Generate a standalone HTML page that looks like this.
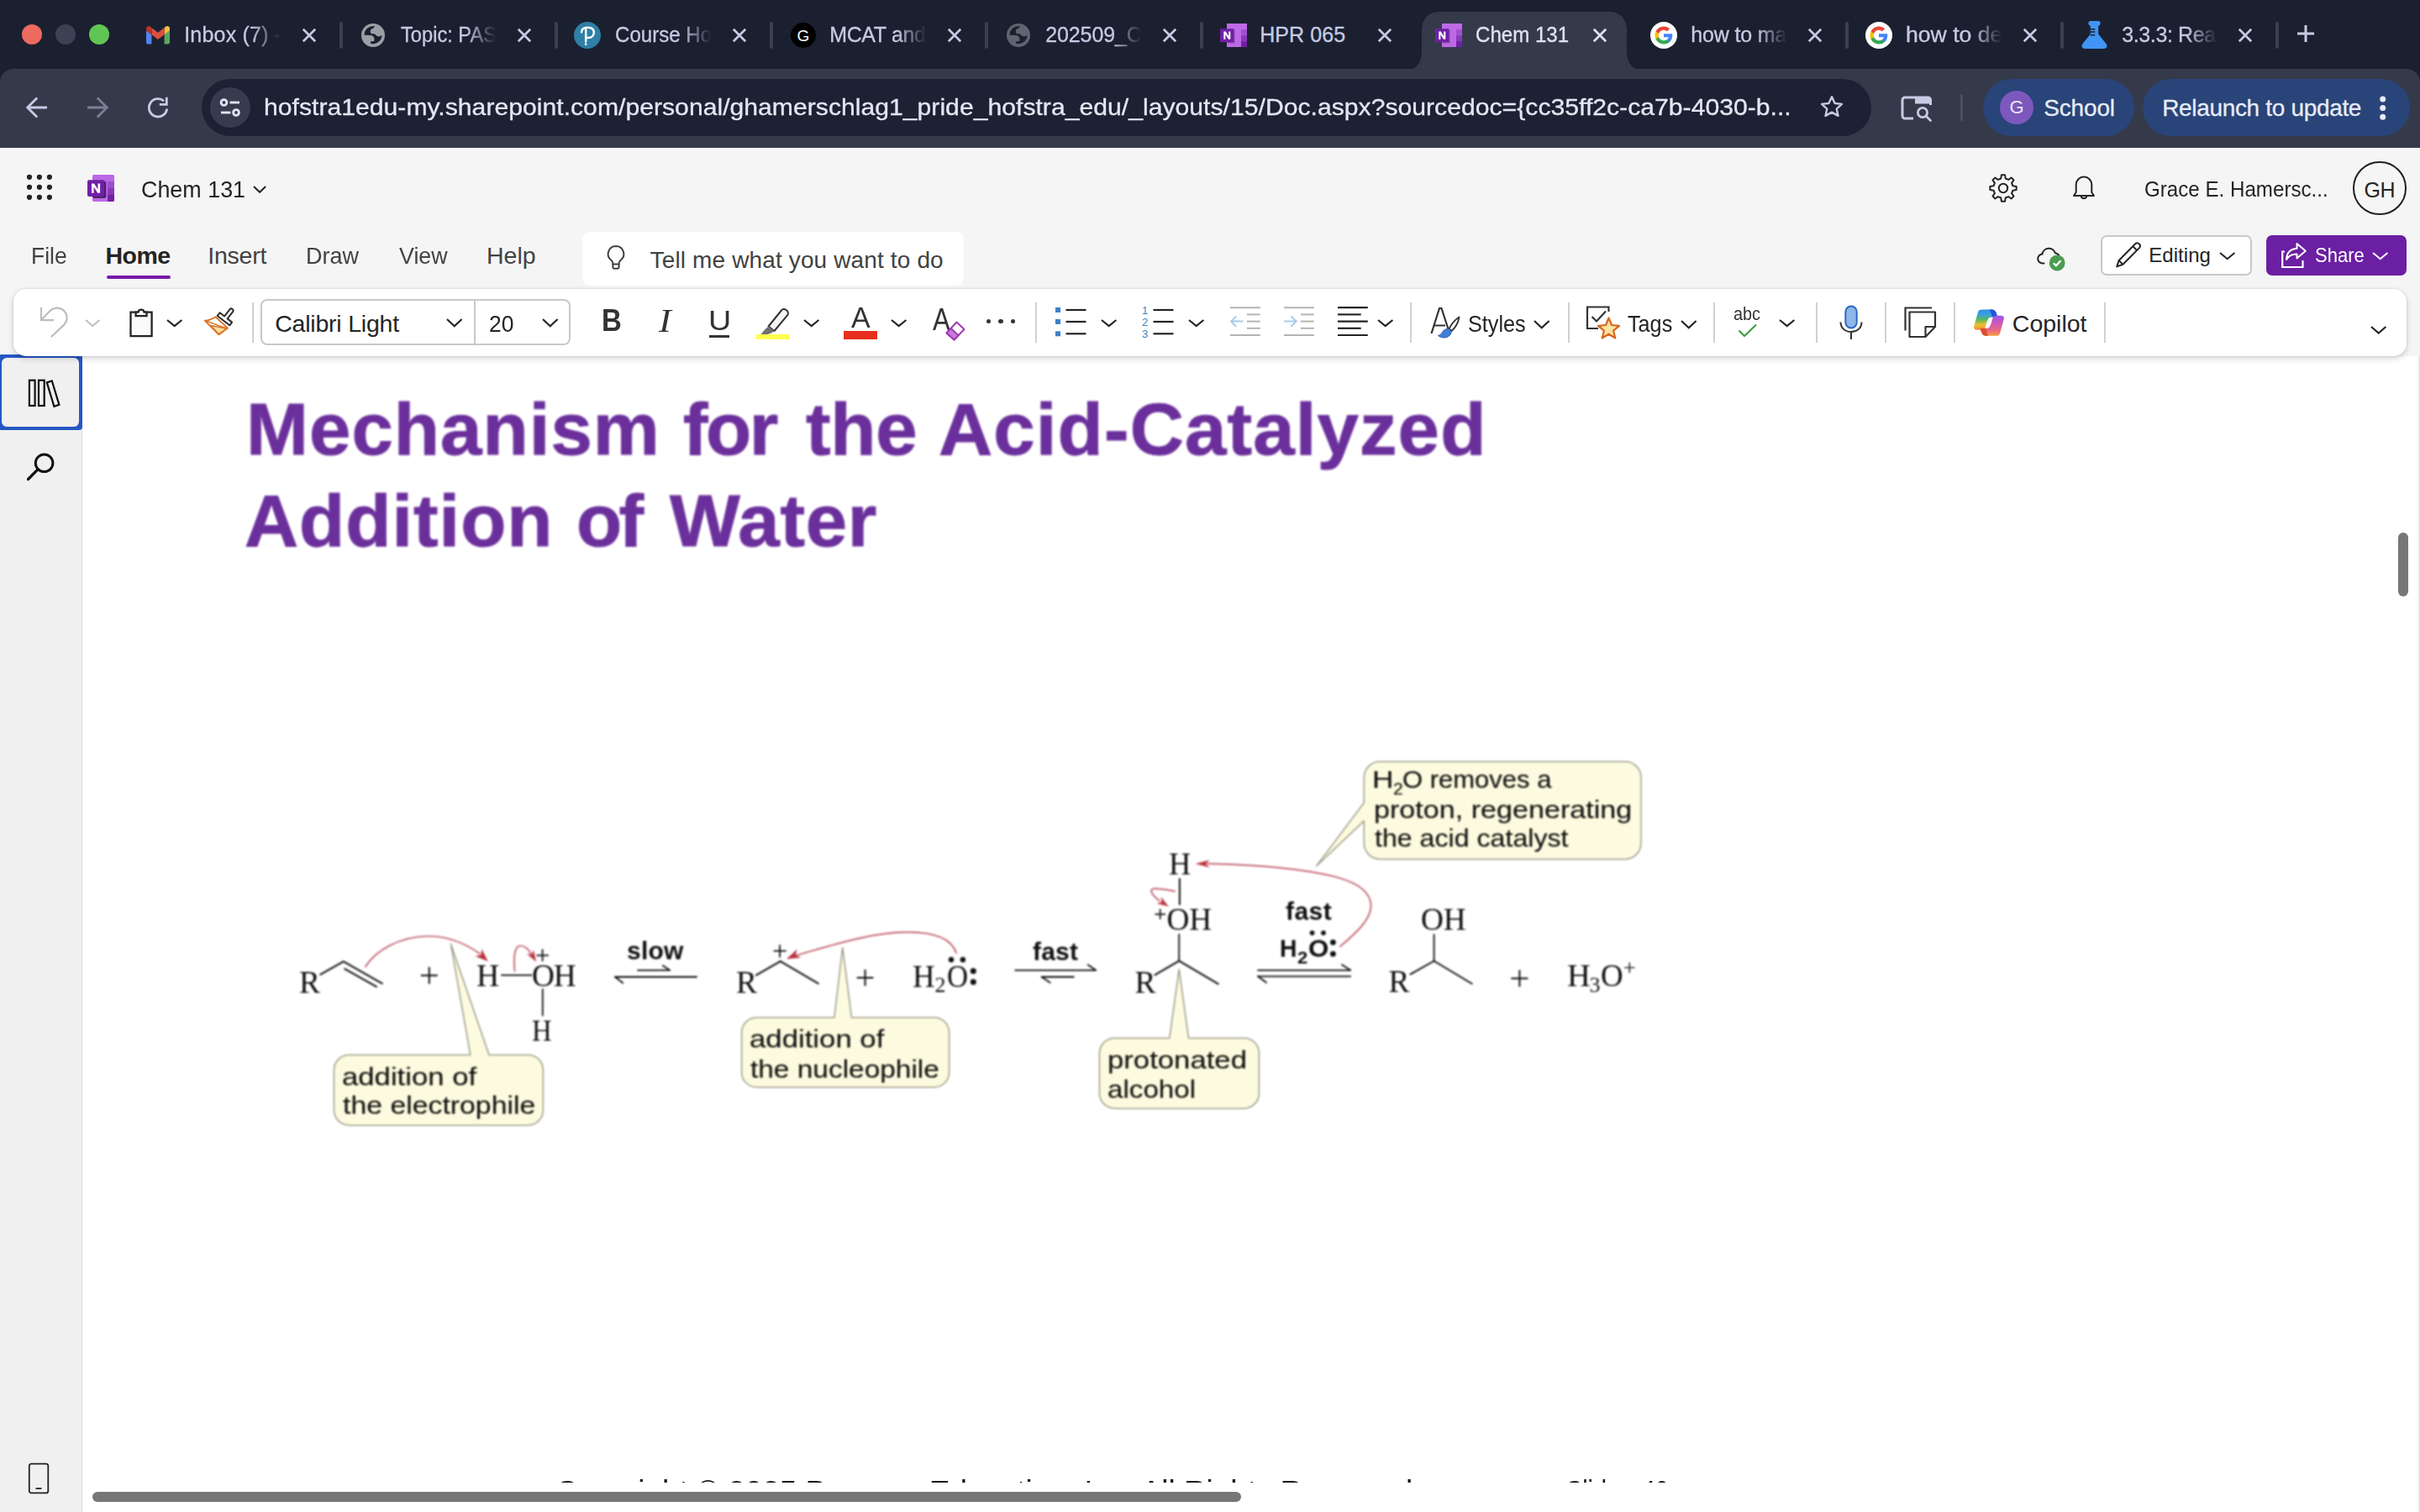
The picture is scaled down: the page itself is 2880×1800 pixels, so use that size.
<!DOCTYPE html>
<html><head><meta charset="utf-8"><title>Chem 131</title>
<style>
html,body{margin:0;padding:0;}
body{width:2880px;height:1800px;overflow:hidden;position:relative;background:#fff;font-family:"Liberation Sans",sans-serif;}
.b{position:absolute;box-sizing:border-box;display:block;}
.t{position:absolute;white-space:nowrap;line-height:1;}
</style></head>
<body>
<div class="b" style="left:0px;top:0px;width:2880px;height:110px;background:#1b2030;"></div>
<div class="b" style="left:0px;top:82px;width:2880px;height:94px;background:#353a4b;border-radius:16px 16px 0 0;"></div>
<div class="b" style="left:26px;top:29px;width:24px;height:24px;background:#ed6a5e;border-radius:50%;"></div>
<div class="b" style="left:66px;top:29px;width:24px;height:24px;background:#3c4153;border-radius:50%;"></div>
<div class="b" style="left:106px;top:29px;width:24px;height:24px;background:#61c554;border-radius:50%;"></div>
<svg class="b" style="left:1672px;top:14px;" width="284" height="70" viewBox="0 0 284 70"><path d="M0 70 C12 70 20 62 20 48 V22 C20 8 28 0 42 0 H242 C256 0 264 8 264 22 V48 C264 62 272 70 284 70 Z" fill="#353a4b"/></svg>
<svg class="b" style="left:173.5px;top:31px;" width="28" height="22" viewBox="0 0 28 22"><path d="M0 4.500V19.500a2 2 0 0 0 2 2H6.500V9.500L14 15l7.500-5.500V21.500H26a2 2 0 0 0 2-2V4.500z" fill="none"/>
<path d="M0 19.600a1.900 1.900 0 0 0 1.900 1.900H6.400V10.300L0 5.500z" fill="#5286ee"/>
<path d="M21.600 21.500h4.500a1.900 1.900 0 0 0 1.900-1.900V5.500l-6.400 4.800z" fill="#5aa85f"/>
<path d="M21.600 2.100v8.200L28 5.500V2.900c0-2.400-2.700-3.700-4.600-2.300z" fill="#f2c040"/>
<path d="M6.400 10.300V2.100L14 7.800l7.600-5.700v8.200L14 16z" fill="#d94f3f"/>
<path d="M0 2.900v2.600l6.400 4.800V2.100L4.600.6C2.700-.8 0 .5 0 2.900z" fill="#b5342a"/></svg>
<div class="b" style="left:221px;top:26px;width:122px;height:34px;overflow:hidden;-webkit-mask-image:linear-gradient(to right,#000 64%,transparent 93%);mask-image:linear-gradient(to right,#000 64%,transparent 93%);"><span class="t" style="left:-1.85px;top:3.04px;font:400 25px/1 'Liberation Sans',sans-serif;color:#c6cbe3;letter-spacing:0.210px;-webkit-text-stroke:0.3px #c6cbe3;">Inbox (7) -</span></div>
<svg class="b" style="left:358px;top:32px;" width="20" height="20" viewBox="0 0 20 20"><path d="M2.8 2.8L17.2 17.2M17.2 2.8L2.8 17.2" stroke="#c6cbe3" stroke-width="2.7" fill="none"/></svg>
<div class="b" style="left:404px;top:26px;width:4px;height:32px;background:#3a3f52;border-radius:2px;"></div>
<svg class="b" style="left:430px;top:28px;" width="28" height="28" viewBox="0 0 28 28"><circle cx="14" cy="14" r="14" fill="#9aa0a6"/>
<path d="M3.460 13.700A10.800 10.800 0 0 1 15.980 3.230C15.500 4.500 14 5.800 12.200 6.580C11 7.500 10.600 8.800 10.900 9.490C10.900 11 11.200 11.800 12.500 12C14 12.200 15.700 12.200 16.600 13C17.500 14.300 18.500 15 20 15.300C21.800 15.600 23.500 15 24.700 13.850A10.800 10.800 0 0 1 11 23.750L11 21.400L15.100 21.100C15.600 20 15.600 19 15.400 18.200C15.200 16.800 14.800 16 14.200 15.600C13.500 14.800 12.500 14.200 11.600 14.100Z" fill="#1b2030"/></svg>
<div class="b" style="left:477px;top:26px;width:122px;height:34px;overflow:hidden;-webkit-mask-image:linear-gradient(to right,#000 64%,transparent 93%);mask-image:linear-gradient(to right,#000 64%,transparent 93%);"><span class="t" style="left:0.14px;top:3.04px;font:400 25px/1 'Liberation Sans',sans-serif;color:#c6cbe3;transform:scaleX(0.9463);transform-origin:0 0;-webkit-text-stroke:0.3px #c6cbe3;">Topic: PAS</span></div>
<svg class="b" style="left:614px;top:32px;" width="20" height="20" viewBox="0 0 20 20"><path d="M2.8 2.8L17.2 17.2M17.2 2.8L2.8 17.2" stroke="#c6cbe3" stroke-width="2.7" fill="none"/></svg>
<div class="b" style="left:660px;top:26px;width:4px;height:32px;background:#3a3f52;border-radius:2px;"></div>
<svg class="b" style="left:683px;top:26px;" width="32" height="32" viewBox="0 0 30 30"><circle cx="15" cy="15" r="15" fill="#2f7fa6"/>
<path d="M8.500 11.500c0-3.500 3-5.200 6.800-5.200c4.200 0 7 2 7 5.600c0 3.800-3.200 6-7.200 6c-.600 0-1.200 0-1.700-.1" fill="none" stroke="#fff" stroke-width="2.300" stroke-linecap="round"/>
<path d="M13.300 8.500V22" stroke="#fff" stroke-width="2.300" stroke-linecap="round"/>
<circle cx="13.300" cy="25" r="1.300" fill="#fff"/></svg>
<div class="b" style="left:733px;top:26px;width:122px;height:34px;overflow:hidden;-webkit-mask-image:linear-gradient(to right,#000 64%,transparent 93%);mask-image:linear-gradient(to right,#000 64%,transparent 93%);"><span class="t" style="left:-0.82px;top:3.04px;font:400 25px/1 'Liberation Sans',sans-serif;color:#c6cbe3;transform:scaleX(0.9636);transform-origin:0 0;-webkit-text-stroke:0.3px #c6cbe3;">Course Ho</span></div>
<svg class="b" style="left:870px;top:32px;" width="20" height="20" viewBox="0 0 20 20"><path d="M2.8 2.8L17.2 17.2M17.2 2.8L2.8 17.2" stroke="#c6cbe3" stroke-width="2.7" fill="none"/></svg>
<div class="b" style="left:916px;top:26px;width:4px;height:32px;background:#3a3f52;border-radius:2px;"></div>
<svg class="b" style="left:941px;top:27px;" width="30" height="30" viewBox="0 0 30 30"><circle cx="15" cy="15" r="15" fill="#000"/><text x="15" y="21.500" font-family="Liberation Sans" font-size="19" fill="#fff" text-anchor="middle">G</text></svg>
<div class="b" style="left:989px;top:26px;width:122px;height:34px;overflow:hidden;-webkit-mask-image:linear-gradient(to right,#000 64%,transparent 93%);mask-image:linear-gradient(to right,#000 64%,transparent 93%);"><span class="t" style="left:-1.85px;top:3.04px;font:400 25px/1 'Liberation Sans',sans-serif;color:#c6cbe3;letter-spacing:-0.346px;-webkit-text-stroke:0.3px #c6cbe3;">MCAT and</span></div>
<svg class="b" style="left:1126px;top:32px;" width="20" height="20" viewBox="0 0 20 20"><path d="M2.8 2.8L17.2 17.2M17.2 2.8L2.8 17.2" stroke="#c6cbe3" stroke-width="2.7" fill="none"/></svg>
<div class="b" style="left:1172px;top:26px;width:4px;height:32px;background:#3a3f52;border-radius:2px;"></div>
<svg class="b" style="left:1198px;top:28px;" width="28" height="28" viewBox="0 0 28 28"><circle cx="14" cy="14" r="14" fill="#5f6470"/>
<path d="M3.460 13.700A10.800 10.800 0 0 1 15.980 3.230C15.500 4.500 14 5.800 12.200 6.580C11 7.500 10.600 8.800 10.900 9.490C10.900 11 11.200 11.800 12.500 12C14 12.200 15.700 12.200 16.600 13C17.500 14.300 18.500 15 20 15.300C21.800 15.600 23.500 15 24.700 13.850A10.800 10.800 0 0 1 11 23.750L11 21.400L15.100 21.100C15.600 20 15.600 19 15.400 18.200C15.200 16.800 14.800 16 14.200 15.600C13.500 14.800 12.500 14.200 11.600 14.100Z" fill="#1b2030"/></svg>
<div class="b" style="left:1245px;top:26px;width:122px;height:34px;overflow:hidden;-webkit-mask-image:linear-gradient(to right,#000 64%,transparent 93%);mask-image:linear-gradient(to right,#000 64%,transparent 93%);"><span class="t" style="left:-0.85px;top:3.04px;font:400 25px/1 'Liberation Sans',sans-serif;color:#c6cbe3;letter-spacing:-0.090px;-webkit-text-stroke:0.3px #c6cbe3;">202509_C</span></div>
<svg class="b" style="left:1382px;top:32px;" width="20" height="20" viewBox="0 0 20 20"><path d="M2.8 2.8L17.2 17.2M17.2 2.8L2.8 17.2" stroke="#c6cbe3" stroke-width="2.7" fill="none"/></svg>
<div class="b" style="left:1428px;top:26px;width:4px;height:32px;background:#3a3f52;border-radius:2px;"></div>
<svg class="b" style="left:1452px;top:28px;" width="32" height="28" viewBox="0 0 32 28"><rect x="8" y="0" width="24" height="28" fill="#be6ae6"/>
<rect x="25" y="7.200" width="7" height="7" fill="#a04fd2"/>
<rect x="25" y="14.200" width="7" height="7" fill="#8a38ba"/>
<rect x="25" y="21.100" width="7" height="6.900" fill="#6f20a6"/>
<rect x="9" y="7.500" width="8.500" height="16" fill="#000" opacity=".28"/>
<rect x="0" y="6.200" width="16.400" height="16" fill="#6f20a6"/>
<path d="M4.300 18.800V9.600h2.500l3.400 5.600V9.600h2.100v9.200H9.900l-3.500-5.800v5.800z" fill="#fff"/></svg>
<div class="b" style="left:1501px;top:26px;width:122px;height:34px;overflow:hidden;"><span class="t" style="left:-1.85px;top:3.04px;font:400 25px/1 'Liberation Sans',sans-serif;color:#c6cbe3;letter-spacing:0.111px;-webkit-text-stroke:0.3px #c6cbe3;">HPR 065</span></div>
<svg class="b" style="left:1638px;top:32px;" width="20" height="20" viewBox="0 0 20 20"><path d="M2.8 2.8L17.2 17.2M17.2 2.8L2.8 17.2" stroke="#c6cbe3" stroke-width="2.7" fill="none"/></svg>
<svg class="b" style="left:1708px;top:28px;" width="32" height="28" viewBox="0 0 32 28"><rect x="8" y="0" width="24" height="28" fill="#be6ae6"/>
<rect x="25" y="7.200" width="7" height="7" fill="#a04fd2"/>
<rect x="25" y="14.200" width="7" height="7" fill="#8a38ba"/>
<rect x="25" y="21.100" width="7" height="6.900" fill="#6f20a6"/>
<rect x="9" y="7.500" width="8.500" height="16" fill="#000" opacity=".28"/>
<rect x="0" y="6.200" width="16.400" height="16" fill="#6f20a6"/>
<path d="M4.300 18.800V9.600h2.500l3.400 5.600V9.600h2.100v9.200H9.900l-3.500-5.800v5.800z" fill="#fff"/></svg>
<div class="b" style="left:1757px;top:26px;width:122px;height:34px;overflow:hidden;"><span class="t" style="left:-0.82px;top:3.04px;font:400 25px/1 'Liberation Sans',sans-serif;color:#dfe2f0;transform:scaleX(0.9627);transform-origin:0 0;-webkit-text-stroke:0.3px #dfe2f0;">Chem 131</span></div>
<svg class="b" style="left:1894px;top:32px;" width="20" height="20" viewBox="0 0 20 20"><path d="M2.8 2.8L17.2 17.2M17.2 2.8L2.8 17.2" stroke="#dfe2f0" stroke-width="2.7" fill="none"/></svg>
<svg class="b" style="left:1964px;top:26px;" width="32" height="32" viewBox="0 0 32 32"><circle cx="16" cy="16" r="16" fill="#fff"/>
<g transform="translate(5.500 5.500) scale(0.4375)">
<path d="M47.500 24.600c0-1.600-.1-3.100-.4-4.600H24v9h13.200c-.6 3-2.300 5.500-4.900 7.200v6h7.900c4.600-4.300 7.300-10.500 7.300-17.600z" fill="#4285f4"/>
<path d="M24 48c6.500 0 12-2.100 16-5.800l-7.900-6c-2.100 1.400-4.900 2.300-8.100 2.300c-6.300 0-11.600-4.200-13.500-9.900H2.500v6.200C6.500 42.600 14.600 48 24 48z" fill="#34a853"/>
<path d="M10.500 28.600c-.5-1.400-.8-3-.8-4.600s.3-3.200.8-4.600v-6.200H2.500C.9 16.400 0 20.100 0 24s.9 7.600 2.500 10.800z" fill="#fbbc05"/>
<path d="M24 9.500c3.500 0 6.700 1.200 9.200 3.600l6.900-6.900C35.900 2.400 30.500 0 24 0C14.600 0 6.500 5.400 2.500 13.200l8 6.200c1.900-5.700 7.200-9.900 13.500-9.900z" fill="#ea4335"/>
</g></svg>
<div class="b" style="left:2013px;top:26px;width:122px;height:34px;overflow:hidden;-webkit-mask-image:linear-gradient(to right,#000 64%,transparent 93%);mask-image:linear-gradient(to right,#000 64%,transparent 93%);"><span class="t" style="left:-0.85px;top:3.04px;font:400 25px/1 'Liberation Sans',sans-serif;color:#c6cbe3;letter-spacing:-0.129px;-webkit-text-stroke:0.3px #c6cbe3;">how to ma</span></div>
<svg class="b" style="left:2150px;top:32px;" width="20" height="20" viewBox="0 0 20 20"><path d="M2.8 2.8L17.2 17.2M17.2 2.8L2.8 17.2" stroke="#c6cbe3" stroke-width="2.7" fill="none"/></svg>
<div class="b" style="left:2196px;top:26px;width:4px;height:32px;background:#3a3f52;border-radius:2px;"></div>
<svg class="b" style="left:2220px;top:26px;" width="32" height="32" viewBox="0 0 32 32"><circle cx="16" cy="16" r="16" fill="#fff"/>
<g transform="translate(5.500 5.500) scale(0.4375)">
<path d="M47.500 24.600c0-1.600-.1-3.100-.4-4.600H24v9h13.200c-.6 3-2.300 5.500-4.900 7.200v6h7.900c4.600-4.300 7.300-10.500 7.300-17.600z" fill="#4285f4"/>
<path d="M24 48c6.500 0 12-2.100 16-5.800l-7.900-6c-2.100 1.400-4.900 2.300-8.100 2.300c-6.300 0-11.600-4.200-13.500-9.900H2.500v6.200C6.500 42.600 14.600 48 24 48z" fill="#34a853"/>
<path d="M10.500 28.600c-.5-1.400-.8-3-.8-4.600s.3-3.200.8-4.600v-6.200H2.500C.9 16.400 0 20.100 0 24s.9 7.600 2.500 10.800z" fill="#fbbc05"/>
<path d="M24 9.500c3.500 0 6.700 1.200 9.200 3.600l6.900-6.900C35.900 2.400 30.500 0 24 0C14.600 0 6.500 5.400 2.500 13.200l8 6.200c1.900-5.700 7.200-9.900 13.500-9.900z" fill="#ea4335"/>
</g></svg>
<div class="b" style="left:2269px;top:26px;width:122px;height:34px;overflow:hidden;-webkit-mask-image:linear-gradient(to right,#000 64%,transparent 93%);mask-image:linear-gradient(to right,#000 64%,transparent 93%);"><span class="t" style="left:-0.90px;top:3.04px;font:400 25px/1 'Liberation Sans',sans-serif;color:#c6cbe3;transform:scaleX(1.0645);transform-origin:0 0;-webkit-text-stroke:0.3px #c6cbe3;">how to de</span></div>
<svg class="b" style="left:2406px;top:32px;" width="20" height="20" viewBox="0 0 20 20"><path d="M2.8 2.8L17.2 17.2M17.2 2.8L2.8 17.2" stroke="#c6cbe3" stroke-width="2.7" fill="none"/></svg>
<div class="b" style="left:2452px;top:26px;width:4px;height:32px;background:#3a3f52;border-radius:2px;"></div>
<svg class="b" style="left:2476.5px;top:25.3px;" width="32" height="34" viewBox="0 0 32 34"><rect x="8.500" y="0" width="14" height="5.500" rx="2.200" fill="#4193f5"/>
<path d="M10.800 4V15.500L1.200 27.500c-1.800 2.600-.2 5.500 3.300 5.500h22c3.500 0 5.100-2.900 3.300-5.500L20.200 15.500V4z" fill="#4193f5"/>
<path d="M10.800 9.800H16.300M10.800 13.100H16.300M10.800 16.800H16.300" stroke="#1b2030" stroke-width="1.500"/></svg>
<div class="b" style="left:2525px;top:26px;width:122px;height:34px;overflow:hidden;-webkit-mask-image:linear-gradient(to right,#000 64%,transparent 93%);mask-image:linear-gradient(to right,#000 64%,transparent 93%);"><span class="t" style="left:0.15px;top:3.04px;font:400 25px/1 'Liberation Sans',sans-serif;color:#c6cbe3;letter-spacing:-0.361px;-webkit-text-stroke:0.3px #c6cbe3;">3.3.3: Rea</span></div>
<svg class="b" style="left:2662px;top:32px;" width="20" height="20" viewBox="0 0 20 20"><path d="M2.8 2.8L17.2 17.2M17.2 2.8L2.8 17.2" stroke="#c6cbe3" stroke-width="2.7" fill="none"/></svg>
<div class="b" style="left:2708px;top:26px;width:4px;height:32px;background:#3a3f52;border-radius:2px;"></div>
<svg class="b" style="left:2731.8px;top:28.299999999999997px;" width="24" height="24" viewBox="0 0 24 24"><path d="M12 2V22M2 12H22" stroke="#c6cbe3" stroke-width="3" fill="none"/></svg>
<svg class="b" style="left:30px;top:114px;" width="28" height="28" viewBox="0 0 28 28"><path d="M26 14H4M14.200 2.400L2.700 14l11.500 11.600" stroke="#c6cbe3" stroke-width="2.800" fill="none" stroke-linejoin="miter"/></svg>
<svg class="b" style="left:102px;top:114px;" width="28" height="28" viewBox="0 0 28 28"><path d="M2 14H24M13.800 2.400L25.300 14L13.800 25.600" stroke="#7a7f93" stroke-width="2.800" fill="none"/></svg>
<svg class="b" style="left:174px;top:114px;" width="28" height="28" viewBox="0 0 28 28"><path d="M24.700 15.500a10.700 10.700 0 1 1-3.600-9.300" stroke="#c6cbe3" stroke-width="2.800" fill="none"/><path d="M24.300 1.800V10.300H15.800" stroke="#c6cbe3" stroke-width="2.800" fill="none"/></svg>
<div class="b" style="left:240px;top:94px;width:1987px;height:68px;background:#1d2133;border-radius:34px;"></div>
<div class="b" style="left:250px;top:104px;width:48px;height:48px;background:#363b4d;border-radius:50%;"></div>
<svg class="b" style="left:261px;top:117px;" width="26" height="22" viewBox="0 0 26 22"><circle cx="5.500" cy="5" r="3.400" stroke="#dfe2f0" stroke-width="2.900" fill="none"/><path d="M12.500 5H24" stroke="#dfe2f0" stroke-width="2.900"/><circle cx="20" cy="17" r="3.400" stroke="#dfe2f0" stroke-width="2.900" fill="none"/><path d="M2 17H13.500" stroke="#dfe2f0" stroke-width="2.900"/></svg>
<span class="t" style="left:314.08px;top:114.30px;font:400 28px/1 'Liberation Sans',sans-serif;color:#e4e6f2;transform:scaleX(1.0775);transform-origin:0 0;-webkit-text-stroke:0.3px #e4e6f2;">hofstra1edu-my.sharepoint.com/personal/ghamerschlag1_pride_hofstra_edu/_layouts/15/Doc.aspx?sourcedoc={cc35ff2c-ca7b-4030-b...</span>
<svg class="b" style="left:2165px;top:112px;" width="30" height="30" viewBox="0 0 30 30"><path d="M15 3.200l3.600 7.800l8.400.9l-6.300 5.700l1.800 8.300L15 21.600L7.500 25.900l1.800-8.300L3 11.900l8.400-.9z" stroke="#c6cbe3" stroke-width="2.400" fill="none" stroke-linejoin="round"/></svg>
<svg class="b" style="left:2262px;top:112px;" width="38" height="34" viewBox="0 0 38 34"><path d="M35.500 13V7a3 3 0 0 0-3-3H5a3 3 0 0 0-3 3V26a3 3 0 0 0 3 3H15" stroke="#c6cbe3" stroke-width="3" fill="none"/><path d="M17 3.500H33a2.500 2.500 0 0 1 2.500 2.500V11.500H17z" fill="#c6cbe3"/><circle cx="26" cy="22" r="5.600" stroke="#c6cbe3" stroke-width="2.800" fill="none"/><path d="M30 26L35.500 31.500" stroke="#c6cbe3" stroke-width="2.800" stroke-linecap="round"/></svg>
<div class="b" style="left:2333px;top:112px;width:3px;height:32px;background:#4a4f62;border-radius:1.500px;"></div>
<div class="b" style="left:2360px;top:94px;width:180px;height:68px;background:#294478;border-radius:34px;"></div>
<div class="b" style="left:2380px;top:108px;width:40px;height:40px;background:#7c58bd;border-radius:50%;"></div>
<span class="t" style="left:2391.50px;top:117.38px;font:400 22px/1 'Liberation Sans',sans-serif;color:#e9e4f7;">G</span>
<span class="t" style="left:2432.15px;top:115.30px;font:400 28px/1 'Liberation Sans',sans-serif;color:#e6ebf7;letter-spacing:-0.139px;-webkit-text-stroke:0.3px #e6ebf7;">School</span>
<div class="b" style="left:2550px;top:94px;width:318px;height:68px;background:#294478;border-radius:34px;"></div>
<span class="t" style="left:2573.15px;top:115.30px;font:400 28px/1 'Liberation Sans',sans-serif;color:#e6ebf7;letter-spacing:-0.328px;-webkit-text-stroke:0.3px #e6ebf7;">Relaunch to update</span>
<svg class="b" style="left:2830px;top:112px;" width="12" height="34" viewBox="0 0 12 34"><circle cx="5.700" cy="6.1" r="3.500" fill="#e6ebf7"/><circle cx="5.700" cy="16.6" r="3.500" fill="#e6ebf7"/><circle cx="5.700" cy="27.2" r="3.500" fill="#e6ebf7"/></svg>
<div class="b" style="left:0px;top:176px;width:2880px;height:1624px;background:#f5f5f5;"></div>
<svg class="b" style="left:28px;top:204px;" width="38" height="38" viewBox="0 0 38 38"><circle cx="7" cy="6.800000000000011" r="3.100" fill="#242424"/><circle cx="7" cy="18.80000000000001" r="3.100" fill="#242424"/><circle cx="7" cy="30.80000000000001" r="3.100" fill="#242424"/><circle cx="18.9" cy="6.800000000000011" r="3.100" fill="#242424"/><circle cx="18.9" cy="18.80000000000001" r="3.100" fill="#242424"/><circle cx="18.9" cy="30.80000000000001" r="3.100" fill="#242424"/><circle cx="30.9" cy="6.800000000000011" r="3.100" fill="#242424"/><circle cx="30.9" cy="18.80000000000001" r="3.100" fill="#242424"/><circle cx="30.9" cy="30.80000000000001" r="3.100" fill="#242424"/></svg>
<svg class="b" style="left:104px;top:207.9px;" width="32" height="32" viewBox="0 0 32 32"><rect x="6" y="0" width="26" height="32" rx="1.800" fill="#bb68e6"/>
<rect x="24.100" y="8.200" width="7.900" height="8" fill="#9a4dcf"/>
<rect x="24.100" y="16.100" width="7.900" height="8" fill="#8a38b8"/>
<path d="M24.100 24.100h7.900v6.100a1.800 1.800 0 0 1-1.800 1.800h-6.100z" fill="#7520a5"/>
<rect x="6.200" y="7.800" width="16" height="20" rx="2" fill="#2a1635" opacity=".85"/>
<rect x="0" y="6.200" width="20.400" height="19.800" rx="2" fill="#7020a8"/>
<path d="M5 21.800V10.400h3l4.500 7.200V10.400h2.600v11.400h-2.900l-4.600-7.400v7.400z" fill="#fff"/></svg>
<span class="t" style="left:167.76px;top:210.87px;font:400 28.5px/1 'Liberation Sans',sans-serif;color:#242424;transform:scaleX(0.9434);transform-origin:0 0;">Chem 131</span>
<svg class="b" style="left:300.09999999999997px;top:219.9px;" width="18.2" height="10.8" viewBox="0 0 18.2 10.8"><path d="M2 2L9.1 8.8L16.2 2" stroke="#242424" stroke-width="2" fill="none" stroke-linejoin="miter"/></svg>
<span class="t" style="left:37.44px;top:290.37px;font:400 28.5px/1 'Liberation Sans',sans-serif;color:#424242;transform:scaleX(0.9310);transform-origin:0 0;">File</span>
<span class="t" style="left:125.50px;top:290.37px;font:700 28.5px/1 'Liberation Sans',sans-serif;color:#242424;letter-spacing:-0.511px;">Home</span>
<div class="b" style="left:126.5px;top:327.7px;width:76.5px;height:4.3px;background:#7719aa;border-radius:2.200px;"></div>
<span class="t" style="left:247.30px;top:290.37px;font:400 28.5px/1 'Liberation Sans',sans-serif;color:#424242;letter-spacing:-0.232px;">Insert</span>
<span class="t" style="left:364.11px;top:290.37px;font:400 28.5px/1 'Liberation Sans',sans-serif;color:#424242;transform:scaleX(0.9473);transform-origin:0 0;">Draw</span>
<span class="t" style="left:475.00px;top:290.37px;font:400 28.5px/1 'Liberation Sans',sans-serif;color:#424242;transform:scaleX(0.9404);transform-origin:0 0;">View</span>
<span class="t" style="left:579.00px;top:290.37px;font:400 28.5px/1 'Liberation Sans',sans-serif;color:#424242;letter-spacing:-0.021px;">Help</span>
<div class="b" style="left:693px;top:275.8px;width:454px;height:64px;background:#fff;border-radius:9px;"></div>
<svg class="b" style="left:721px;top:291px;" width="24" height="34" viewBox="0 0 24 34"><path d="M12 2a9.300 9.300 0 0 0-5.600 16.700c.9.700 1.500 1.700 1.700 2.800l.300 2h7.200l.300-2c.2-1.100.8-2.100 1.700-2.800A9.300 9.300 0 0 0 12 2z" stroke="#424242" stroke-width="2" fill="none"/><path d="M8.400 23.500v3.300a2 2 0 0 0 2 2h3.200a2 2 0 0 0 2-2v-3.300" stroke="#424242" stroke-width="2" fill="none"/></svg>
<span class="t" style="left:773.60px;top:295.80px;font:400 28px/1 'Liberation Sans',sans-serif;color:#424242;letter-spacing:0.137px;">Tell me what you want to do</span>
<svg class="b" style="left:2367px;top:207.2px;" width="34" height="34" viewBox="0 0 34 34"><path d="M28.47 14.25L32.66 14.90L32.66 19.10L28.47 19.75L27.06 23.17L29.56 26.59L26.59 29.56L23.17 27.06L19.75 28.47L19.10 32.66L14.90 32.66L14.25 28.47L10.83 27.06L7.41 29.56L4.44 26.59L6.94 23.17L5.53 19.75L1.34 19.10L1.34 14.90L5.53 14.25L6.94 10.83L4.44 7.41L7.41 4.44L10.83 6.94L14.25 5.53L14.90 1.34L19.10 1.34L19.75 5.53L23.17 6.94L26.59 4.44L29.56 7.41L27.06 10.83Z" stroke="#242424" stroke-width="2" fill="none" stroke-linejoin="round"/><circle cx="17" cy="17" r="5.200" stroke="#242424" stroke-width="2" fill="none"/></svg>
<svg class="b" style="left:2466px;top:208px;" width="28" height="32" viewBox="0 0 28 32"><path d="M14 2.500a9.300 9.300 0 0 0-9.300 9.300V21L2 25h24l-2.700-4V11.800A9.300 9.300 0 0 0 14 2.500z" stroke="#242424" stroke-width="2" fill="none" stroke-linejoin="round"/><path d="M10.600 25.500a3.500 3.500 0 0 0 6.800 0" stroke="#242424" stroke-width="2" fill="none"/></svg>
<span class="t" style="left:2551.77px;top:212.49px;font:400 26px/1 'Liberation Sans',sans-serif;color:#242424;transform:scaleX(0.9286);transform-origin:0 0;">Grace E. Hamersc...</span>
<div class="b" style="left:2800.3px;top:192.3px;width:63.4px;height:63.4px;border:2.200px solid #1f1f1f;border-radius:50%;"></div>
<span class="t" style="left:2813.60px;top:213.94px;font:400 25px/1 'Liberation Sans',sans-serif;color:#242424;letter-spacing:-0.646px;">GH</span>
<svg class="b" style="left:2424px;top:291px;" width="36" height="32" viewBox="0 0 36 32"><path d="M8.500 22.500H7a5.500 5.500 0 0 1-.6-11a8 8 0 0 1 15.500-1.300a6 6 0 0 1 4.600 3.300" stroke="#242424" stroke-width="2" fill="none" stroke-linecap="round"/><circle cx="24.200" cy="22" r="9.400" fill="#4a9c50"/><path d="M19.800 22.200l3.100 3.100l5.600-6" stroke="#fff" stroke-width="2.200" fill="none"/></svg>
<div class="b" style="left:2499.5px;top:280.2px;width:180.8px;height:47.5px;background:#fff;border:2px solid #c8c8c8;border-radius:7px;"></div>
<svg class="b" style="left:2516px;top:287px;" width="34" height="34" viewBox="0 0 34 34"><path d="M25.200 3.300a3.400 3.400 0 0 1 4.800 4.800L10.500 27.800l-7.300 2.600l2.500-7.400z" stroke="#242424" stroke-width="2" fill="none" stroke-linejoin="round"/><path d="M22.400 6.300l4.700 4.700M5.700 23.100l4.700 4.700" stroke="#242424" stroke-width="2" fill="none"/></svg>
<span class="t" style="left:2557.20px;top:292.48px;font:400 24px/1 'Liberation Sans',sans-serif;color:#242424;letter-spacing:0.061px;">Editing</span>
<svg class="b" style="left:2639.5px;top:298.85px;" width="21.4" height="11.3" viewBox="0 0 21.4 11.3"><path d="M2 2L10.7 9.3L19.4 2" stroke="#242424" stroke-width="2" fill="none" stroke-linejoin="miter"/></svg>
<div class="b" style="left:2697px;top:280.2px;width:167px;height:47.5px;background:#6b1fa3;border-radius:7px;"></div>
<svg class="b" style="left:2713px;top:287px;" width="34" height="34" viewBox="0 0 34 34"><path d="M6 12.500H3.200V31H27.500V23" stroke="#fff" stroke-width="2.200" fill="none"/><path d="M20.500 3l10.300 8.700L20.500 20.500V15.400C14 15.200 10.500 17.500 8 22c.3-7.500 4.500-12.600 12.500-13.300z" stroke="#fff" stroke-width="2" fill="none" stroke-linejoin="round"/></svg>
<span class="t" style="left:2754.58px;top:292.48px;font:400 24px/1 'Liberation Sans',sans-serif;color:#fff;transform:scaleX(0.9171);transform-origin:0 0;">Share</span>
<svg class="b" style="left:2822.3px;top:298.85px;" width="21.4" height="11.3" viewBox="0 0 21.4 11.3"><path d="M2 2L10.7 9.3L19.4 2" stroke="#fff" stroke-width="2" fill="none" stroke-linejoin="miter"/></svg>
<div class="b" style="left:98px;top:424px;width:2782px;height:1376px;background:#fff;"></div>
<div class="b" style="left:0px;top:424px;width:97.5px;height:1376px;background:#f0f0f0;border-right:1.500px solid #dcdcdc;"></div>
<div class="b" style="left:-2px;top:422px;width:100px;height:89.6px;background:#2458c6;border-radius:4px;"></div>
<div class="b" style="left:2px;top:426px;width:92px;height:81.8px;background:#f0f0f0;border-radius:6px;"></div>
<svg class="b" style="left:31.8px;top:450.3px;" width="42" height="36" viewBox="0 0 42 36"><rect x="2.900" y="2.700" width="6.700" height="30.300" stroke="#111" stroke-width="2.200" fill="none"/><rect x="14" y="2.700" width="6.700" height="30.300" stroke="#111" stroke-width="2.200" fill="none"/><path d="M23.800 5.400l6-1.900l8.600 28.400l-6 1.900z" stroke="#111" stroke-width="2.200" fill="none"/></svg>
<svg class="b" style="left:30px;top:538px;" width="38" height="36" viewBox="0 0 38 36"><circle cx="22.600" cy="13.300" r="10.300" stroke="#111" stroke-width="3" fill="none"/><path d="M15.200 20.700L3.500 32.500" stroke="#111" stroke-width="3.200" stroke-linecap="round"/></svg>
<svg class="b" style="left:32px;top:1740px;" width="28" height="40" viewBox="0 0 28 40"><rect x="2.800" y="2.600" width="22.500" height="34.800" rx="2.500" stroke="#222" stroke-width="1.800" fill="none"/><path d="M10.500 32H17.500" stroke="#222" stroke-width="1.800"/></svg>
<div class="b" style="left:0px;top:0px;width:2880px;height:1800px;filter:blur(.9px);"><span class="t" style="left:292.54px;top:467.69px;font:700 86.6px/1 'Liberation Sans',sans-serif;color:#6b2f9c;letter-spacing:1.014px;transform:scaleX(1.0250);transform-origin:0 0;-webkit-text-stroke:0.9px #6b2f9c;">Mechanism</span><span class="t" style="left:813.44px;top:467.69px;font:700 86.6px/1 'Liberation Sans',sans-serif;color:#6b2f9c;letter-spacing:-2.486px;transform:scaleX(1.0250);transform-origin:0 0;-webkit-text-stroke:0.9px #6b2f9c;">for</span><span class="t" style="left:958.84px;top:467.69px;font:700 86.6px/1 'Liberation Sans',sans-serif;color:#6b2f9c;letter-spacing:-0.255px;transform:scaleX(1.0250);transform-origin:0 0;-webkit-text-stroke:0.9px #6b2f9c;">the</span><span class="t" style="left:1117.21px;top:467.69px;font:700 86.6px/1 'Liberation Sans',sans-serif;color:#6b2f9c;letter-spacing:1.132px;transform:scaleX(1.0250);transform-origin:0 0;-webkit-text-stroke:0.9px #6b2f9c;">Acid-Catalyzed</span><span class="t" style="left:291.01px;top:576.69px;font:700 86.6px/1 'Liberation Sans',sans-serif;color:#6b2f9c;letter-spacing:0.934px;transform:scaleX(1.0250);transform-origin:0 0;-webkit-text-stroke:0.9px #6b2f9c;">Addition</span><span class="t" style="left:686.39px;top:576.69px;font:700 86.6px/1 'Liberation Sans',sans-serif;color:#6b2f9c;letter-spacing:-3.697px;transform:scaleX(1.0250);transform-origin:0 0;-webkit-text-stroke:0.9px #6b2f9c;">of</span><span class="t" style="left:797.46px;top:576.69px;font:700 86.6px/1 'Liberation Sans',sans-serif;color:#6b2f9c;letter-spacing:0.753px;transform:scaleX(1.0250);transform-origin:0 0;-webkit-text-stroke:0.9px #6b2f9c;">Water</span><svg class="b" style="left:0;top:0" width="2880" height="1800" viewBox="0 0 2880 1800"><path d="M415.5 1255.8H559.8L536.5 1123.7L582 1255.8H628.4A18 18 0 0 1 646.4 1273.8V1321.6A18 18 0 0 1 628.4 1339.6H415.5A18 18 0 0 1 397.5 1321.6V1273.8A18 18 0 0 1 415.5 1255.8Z" fill="#fdfbdf" stroke="#8f8e7c" stroke-width="1.300" stroke-linejoin="round"/><path d="M900.6 1211.3H992.9L1002.7 1127.8L1013.5 1211.3H1111.6A18 18 0 0 1 1129.6 1229.3V1276.4A18 18 0 0 1 1111.6 1294.4H900.6A18 18 0 0 1 882.6 1276.4V1229.3A18 18 0 0 1 900.6 1211.3Z" fill="#fdfbdf" stroke="#8f8e7c" stroke-width="1.300" stroke-linejoin="round"/><path d="M1326.5 1235.8H1391.8L1403.2 1153.9L1414.5 1235.8H1480.4A18 18 0 0 1 1498.4 1253.8V1301.6A18 18 0 0 1 1480.4 1319.6H1326.5A18 18 0 0 1 1308.5 1301.6V1253.8A18 18 0 0 1 1326.5 1235.8Z" fill="#fdfbdf" stroke="#8f8e7c" stroke-width="1.300" stroke-linejoin="round"/><path d="M1642.3 906.7H1934A19 19 0 0 1 1953 925.7V1003.8A19 19 0 0 1 1934 1022.8H1642.3A19 19 0 0 1 1623.3 1003.8V977.2L1566.6 1031.1L1623.3 955.7V925.7A19 19 0 0 1 1642.3 906.7Z" fill="#fdfbdf" stroke="#8f8e7c" stroke-width="1.300" stroke-linejoin="round"/><path d="M381.3 1160.2L408.8 1144.7" stroke="#0e0e0e" stroke-width="2.0" fill="none" stroke-linecap="round"/><path d="M408.8 1144.7L454.9 1170.8" stroke="#0e0e0e" stroke-width="2.0" fill="none" stroke-linecap="round"/><path d="M410.2 1153.3L448 1174.6" stroke="#0e0e0e" stroke-width="2.0" fill="none" stroke-linecap="round"/><path d="M434.500 1151.500C447 1131 475 1115.500 508 1114.500C535 1114 558 1126 572 1136" stroke="#bf5464" stroke-width="1.700" fill="none"/><path d="M580.8 1144.5L565.5 1138.2L572.6 1136.9L573.4 1129.7Z" fill="#b8343e"/><path d="M500.8 1161.3H520.8M510.8 1151.3V1171.3" stroke="#0e0e0e" stroke-width="2" fill="none"/><path d="M597 1160.9L632.3 1160.9" stroke="#0e0e0e" stroke-width="1.8" fill="none" stroke-linecap="round"/><path d="M638.35 1137.3H652.85M645.6 1130.05V1144.55" stroke="#0e0e0e" stroke-width="1.8" fill="none"/><path d="M612.600 1156.700C611 1140 612 1126 619.500 1126C625 1126 629 1130 632.500 1136" stroke="#bf5464" stroke-width="1.700" fill="none"/><path d="M638.1 1145.1L626.9 1135.5L632.9 1136.5L634.9 1130.7Z" fill="#b8343e"/><path d="M645.8 1177.7L645.8 1208.7" stroke="#0e0e0e" stroke-width="1.8" fill="none" stroke-linecap="round"/><path d="M758.9 1155.1L797.1 1155.1" stroke="#0e0e0e" stroke-width="1.8" fill="none" stroke-linecap="round"/><path d="M797.1 1155.1L788.8 1149.5" stroke="#0e0e0e" stroke-width="1.8" fill="none" stroke-linecap="round"/><path d="M732 1163L829.1 1163" stroke="#0e0e0e" stroke-width="1.8" fill="none" stroke-linecap="round"/><path d="M732 1163L741.3 1170.2" stroke="#0e0e0e" stroke-width="1.8" fill="none" stroke-linecap="round"/><path d="M900 1160.9L928.7 1144.4" stroke="#0e0e0e" stroke-width="2.0" fill="none" stroke-linecap="round"/><path d="M928.7 1144.4L973.8 1170.8" stroke="#0e0e0e" stroke-width="2.0" fill="none" stroke-linecap="round"/><path d="M920.6 1132.2H935.6M928.1 1124.7V1139.7" stroke="#0e0e0e" stroke-width="1.8" fill="none"/><path d="M1138.300 1135.100C1133 1118 1112 1109.500 1079 1109.700C1035 1110 985 1127 947 1137.500" stroke="#bf5464" stroke-width="1.700" fill="none"/><path d="M935.9 1141.8L948.7 1130.1L946.8 1137.0L953.2 1140.1Z" fill="#b8343e"/><path d="M1019.7499999999999 1164H1039.4499999999998M1029.6 1154.15V1173.85" stroke="#0e0e0e" stroke-width="2" fill="none"/><circle cx="1132" cy="1142.500" r="3.200" fill="#0e0e0e"/><circle cx="1145.9" cy="1142.500" r="3.200" fill="#0e0e0e"/><circle cx="1158.300" cy="1155.9" r="3.500" fill="#0e0e0e"/><circle cx="1158.300" cy="1169" r="3.500" fill="#0e0e0e"/><path d="M1208.1 1155.1L1304.1 1155.1" stroke="#0e0e0e" stroke-width="1.8" fill="none" stroke-linecap="round"/><path d="M1304.1 1155.1L1294.7 1148.4" stroke="#0e0e0e" stroke-width="1.8" fill="none" stroke-linecap="round"/><path d="M1239.6 1163L1277.8 1163" stroke="#0e0e0e" stroke-width="1.8" fill="none" stroke-linecap="round"/><path d="M1239.6 1163L1249.7 1169.7" stroke="#0e0e0e" stroke-width="1.8" fill="none" stroke-linecap="round"/><path d="M1403.9 1046.3L1403.9 1076.7" stroke="#0e0e0e" stroke-width="2" fill="none" stroke-linecap="round"/><path d="M1398.800 1061.100C1389 1059.300 1376 1057 1371.700 1058.200C1368.500 1060 1370 1064.500 1380 1072.500" stroke="#bf5464" stroke-width="1.700" fill="none"/><path d="M1390.9 1079.3L1376.6 1075.6L1382.4 1073.8L1381.7 1067.7Z" fill="#b8343e"/><path d="M1374.45 1088.3H1386.95M1380.7 1082.05V1094.55" stroke="#0e0e0e" stroke-width="1.7" fill="none"/><path d="M1403.2 1112.4L1403.2 1143.9" stroke="#0e0e0e" stroke-width="1.8" fill="none" stroke-linecap="round"/><path d="M1403.2 1143.9L1374.5 1160.7" stroke="#0e0e0e" stroke-width="2.0" fill="none" stroke-linecap="round"/><path d="M1403.2 1143.9L1449.8 1171.3" stroke="#0e0e0e" stroke-width="2.0" fill="none" stroke-linecap="round"/><circle cx="1561.6" cy="1110.600" r="2.900" fill="#0e0e0e"/><circle cx="1575" cy="1110.600" r="2.900" fill="#0e0e0e"/><circle cx="1586.400" cy="1121.8" r="3.400" fill="#0e0e0e"/><circle cx="1586.400" cy="1135.6" r="3.400" fill="#0e0e0e"/><path d="M1497 1155.1L1607.2 1155.1" stroke="#0e0e0e" stroke-width="1.8" fill="none" stroke-linecap="round"/><path d="M1607.2 1155.1L1597 1148.4" stroke="#0e0e0e" stroke-width="1.8" fill="none" stroke-linecap="round"/><path d="M1497 1162.3L1607.2 1162.3" stroke="#0e0e0e" stroke-width="1.8" fill="none" stroke-linecap="round"/><path d="M1497 1162.3L1507 1169.7" stroke="#0e0e0e" stroke-width="1.8" fill="none" stroke-linecap="round"/><path d="M1594.400 1127.300C1612 1112 1631 1096 1631.600 1079C1632 1060 1612 1050 1590 1044C1555 1035 1500 1029.500 1436 1028.200" stroke="#bf5464" stroke-width="1.700" fill="none"/><path d="M1422.6 1028.2L1439.6 1023.7L1434.8 1028.2L1439.6 1032.7Z" fill="#b8343e"/><path d="M1706.6 1112.6L1706.6 1144" stroke="#0e0e0e" stroke-width="1.8" fill="none" stroke-linecap="round"/><path d="M1706.6 1144L1678.5 1159.8" stroke="#0e0e0e" stroke-width="2.0" fill="none" stroke-linecap="round"/><path d="M1706.6 1144L1751.6 1171" stroke="#0e0e0e" stroke-width="2.0" fill="none" stroke-linecap="round"/><path d="M1798.4 1164.7H1818.4M1808.4 1154.7V1174.7" stroke="#0e0e0e" stroke-width="2" fill="none"/><path d="M1933.05 1151.9H1945.55M1939.3 1145.65V1158.15" stroke="#0e0e0e" stroke-width="1.4" fill="none"/></svg><span class="t" style="left:356.00px;top:1151.26px;font:400 37.3px/1 'Liberation Serif',serif;color:#0e0e0e;">R</span><span class="t" style="left:567.39px;top:1143.06px;font:400 37.3px/1 'Liberation Serif',serif;color:#0e0e0e;transform:scaleX(1.0120);transform-origin:0 0;">H</span><span class="t" style="left:633.00px;top:1143.06px;font:400 37.3px/1 'Liberation Serif',serif;color:#0e0e0e;letter-spacing:-1.135px;">OH</span><span class="t" style="left:633.47px;top:1210.29px;font:400 35px/1 'Liberation Serif',serif;color:#0e0e0e;transform:scaleX(0.9333);transform-origin:0 0;">H</span><span class="t" style="left:406.91px;top:1267.20px;font:400 30px/1 'Liberation Sans',sans-serif;color:#0e0e0e;transform:scaleX(1.1568);transform-origin:0 0;-webkit-text-stroke:0.12px #0e0e0e;">addition of</span><span class="t" style="left:408.07px;top:1301.11px;font:400 30px/1 'Liberation Sans',sans-serif;color:#0e0e0e;transform:scaleX(1.1267);transform-origin:0 0;-webkit-text-stroke:0.12px #0e0e0e;">the electrophile</span><span class="t" style="left:746.10px;top:1117.31px;font:700 30px/1 'Liberation Sans',sans-serif;color:#0e0e0e;letter-spacing:0.185px;">slow</span><span class="t" style="left:876.00px;top:1151.36px;font:400 37.3px/1 'Liberation Serif',serif;color:#0e0e0e;">R</span><span class="t" style="left:1086.31px;top:1143.56px;font:400 37.3px/1 'Liberation Serif',serif;color:#0e0e0e;transform:scaleX(0.9880);transform-origin:0 0;">H</span><span class="t" style="left:1112.50px;top:1159.92px;font:400 26px/1 'Liberation Serif',serif;color:#0e0e0e;">2</span><span class="t" style="left:1126.77px;top:1143.56px;font:400 37.3px/1 'Liberation Serif',serif;color:#0e0e0e;transform:scaleX(0.9320);transform-origin:0 0;">O</span><span class="t" style="left:892.11px;top:1221.81px;font:400 30px/1 'Liberation Sans',sans-serif;color:#0e0e0e;transform:scaleX(1.1582);transform-origin:0 0;-webkit-text-stroke:0.12px #0e0e0e;">addition of</span><span class="t" style="left:893.27px;top:1257.61px;font:400 30px/1 'Liberation Sans',sans-serif;color:#0e0e0e;transform:scaleX(1.1140);transform-origin:0 0;-webkit-text-stroke:0.12px #0e0e0e;">the nucleophile</span><span class="t" style="left:1229.00px;top:1117.81px;font:700 30px/1 'Liberation Sans',sans-serif;color:#0e0e0e;letter-spacing:0.214px;">fast</span><span class="t" style="left:1390.62px;top:1010.46px;font:400 37.3px/1 'Liberation Serif',serif;color:#0e0e0e;transform:scaleX(0.9760);transform-origin:0 0;">H</span><span class="t" style="left:1388.60px;top:1075.56px;font:400 37.3px/1 'Liberation Serif',serif;color:#0e0e0e;letter-spacing:-0.335px;">OH</span><span class="t" style="left:1350.50px;top:1150.76px;font:400 37.3px/1 'Liberation Serif',serif;color:#0e0e0e;">R</span><span class="t" style="left:1318.31px;top:1246.61px;font:400 30px/1 'Liberation Sans',sans-serif;color:#0e0e0e;transform:scaleX(1.1570);transform-origin:0 0;-webkit-text-stroke:0.12px #0e0e0e;">protonated</span><span class="t" style="left:1318.36px;top:1281.51px;font:400 30px/1 'Liberation Sans',sans-serif;color:#0e0e0e;transform:scaleX(1.1057);transform-origin:0 0;-webkit-text-stroke:0.12px #0e0e0e;">alcohol</span><span class="t" style="left:1530.10px;top:1070.01px;font:700 30px/1 'Liberation Sans',sans-serif;color:#0e0e0e;letter-spacing:0.414px;">fast</span><span class="t" style="left:1522.92px;top:1114.85px;font:700 29px/1 'Liberation Sans',sans-serif;color:#0e0e0e;transform:scaleX(0.9778);transform-origin:0 0;">H</span><span class="t" style="left:1544.40px;top:1129.42px;font:700 21px/1 'Liberation Sans',sans-serif;color:#0e0e0e;transform:scaleX(1.0545);transform-origin:0 0;">2</span><span class="t" style="left:1556.82px;top:1114.85px;font:700 29px/1 'Liberation Sans',sans-serif;color:#0e0e0e;transform:scaleX(1.0810);transform-origin:0 0;">O</span><span class="t" style="left:1633.48px;top:913.43px;font:400 29.5px/1 'Liberation Sans',sans-serif;color:#0e0e0e;transform:scaleX(1.1974);transform-origin:0 0;-webkit-text-stroke:0.12px #0e0e0e;">H</span><span class="t" style="left:1657.57px;top:929.59px;font:400 19.5px/1 'Liberation Sans',sans-serif;color:#0e0e0e;transform:scaleX(1.0870);transform-origin:0 0;-webkit-text-stroke:0.12px #0e0e0e;">2</span><span class="t" style="left:1669.01px;top:913.43px;font:400 29.5px/1 'Liberation Sans',sans-serif;color:#0e0e0e;transform:scaleX(1.0506);transform-origin:0 0;-webkit-text-stroke:0.12px #0e0e0e;">O removes a</span><span class="t" style="left:1634.71px;top:948.63px;font:400 29.5px/1 'Liberation Sans',sans-serif;color:#0e0e0e;transform:scaleX(1.1564);transform-origin:0 0;-webkit-text-stroke:0.12px #0e0e0e;">proton, regenerating</span><span class="t" style="left:1635.87px;top:983.03px;font:400 29.5px/1 'Liberation Sans',sans-serif;color:#0e0e0e;transform:scaleX(1.0896);transform-origin:0 0;-webkit-text-stroke:0.12px #0e0e0e;">the acid catalyst</span><span class="t" style="left:1691.00px;top:1076.36px;font:400 37.3px/1 'Liberation Serif',serif;color:#0e0e0e;letter-spacing:-0.235px;">OH</span><span class="t" style="left:1652.50px;top:1149.86px;font:400 37.3px/1 'Liberation Serif',serif;color:#0e0e0e;">R</span><span class="t" style="left:1865.17px;top:1143.16px;font:400 37.3px/1 'Liberation Serif',serif;color:#0e0e0e;transform:scaleX(1.0320);transform-origin:0 0;">H</span><span class="t" style="left:1891.50px;top:1159.72px;font:400 26px/1 'Liberation Serif',serif;color:#0e0e0e;">3</span><span class="t" style="left:1904.61px;top:1143.16px;font:400 37.3px/1 'Liberation Serif',serif;color:#0e0e0e;transform:scaleX(0.9880);transform-origin:0 0;">O</span></div>
<div class="b" style="left:0px;top:1745px;width:2880px;height:20px;overflow:hidden;"><div style="position:absolute;left:0;top:0;width:2880px;height:60px;filter:blur(.7px);"><span class="t" style="left:660.95px;top:11.87px;font:400 35px/1 'Liberation Sans',sans-serif;color:#111;transform:scaleX(1.0524);transform-origin:0 0;">Copyright © 2025 Pearson Education, Inc. All Rights Reserved</span><span class="t" style="left:1863.68px;top:11.87px;font:400 35px/1 'Liberation Sans',sans-serif;color:#111;transform:scaleX(0.8231);transform-origin:0 0;">Slide - 40</span></div></div>
<div class="b" style="left:110px;top:1776px;width:1367px;height:12px;background:#787775;border-radius:6px;"></div>
<div class="b" style="left:2854px;top:634px;width:12px;height:76px;background:#787775;border-radius:6px;"></div>
<div class="b" style="left:2878px;top:424px;width:2px;height:1376px;background:#e6e6e6;"></div>
<div class="b" style="left:16.4px;top:344.3px;width:2847.4px;height:79.5px;background:#fff;border-radius:15px;box-shadow:0 3px 7px rgba(0,0,0,.17),0 0 3px rgba(0,0,0,.12);"></div>
<svg class="b" style="left:46px;top:364px;" width="36" height="40" viewBox="0 0 36 40"><path d="M3 2V17.100H18" stroke="#bdbdbd" stroke-width="2.200" fill="none"/><path d="M3 17.100L13.600 6A11.700 11.700 0 0 1 30.200 22.600L14.700 37.200" stroke="#bdbdbd" stroke-width="2.200" fill="none"/></svg>
<svg class="b" style="left:99.55px;top:378.6px;" width="20.5" height="11" viewBox="0 0 20.5 11"><path d="M2 2L10.25 9L18.5 2" stroke="#bdbdbd" stroke-width="2" fill="none" stroke-linejoin="miter"/></svg>
<svg class="b" style="left:152px;top:364px;" width="32" height="40" viewBox="0 0 32 40"><path d="M3.500 7.600H28.600V36.100H3.500z" stroke="#242424" stroke-width="2.300" fill="#fafafa"/><path d="M9.600 7.600H12.500a3.600 3.600 0 0 1 7.100 0H22.500V12.100H9.600z" stroke="#242424" stroke-width="2.300" fill="#fafafa" stroke-linejoin="miter"/></svg>
<svg class="b" style="left:196.60000000000002px;top:378.5px;" width="21.4" height="11.2" viewBox="0 0 21.4 11.2"><path d="M2 2L10.7 9.2L19.4 2" stroke="#242424" stroke-width="2.2" fill="none" stroke-linejoin="miter"/></svg>
<svg class="b" style="left:242px;top:366px;" width="40" height="36" viewBox="0 0 40 36"><path d="M1.700 15.700C6 15.500 11 13.500 14.500 11.200L29 24.600L18.400 32.400z" fill="#fff" stroke="#d9762b" stroke-width="1.900" stroke-linejoin="round"/><path d="M8.400 21.300L27.900 25.200L18.400 31.700z" fill="#f8dfa0" stroke="#d9762b" stroke-width="1.500" stroke-linejoin="round"/><path d="M3.500 16.200L28 25" stroke="#d9762b" stroke-width="1.500"/><path d="M16.750 9.930L19.580 6.310L25.020 10.560L31.430 2.360A2.300 2.300 0 0 1 35.050 5.200L28.640 13.400L34.080 17.650L31.250 21.270Z" fill="#fff" stroke="#2b2b2b" stroke-width="2" stroke-linejoin="round"/></svg>
<div class="b" style="left:300px;top:360px;width:2px;height:48px;background:#d1d1d1;"></div>
<div class="b" style="left:310.3px;top:356.2px;width:369px;height:55.1px;background:#fff;border:2px solid #c8c8c8;border-radius:8px;"></div>
<div class="b" style="left:563.7px;top:357px;width:2px;height:53.5px;background:#c8c8c8;"></div>
<span class="t" style="left:327.20px;top:370.87px;font:400 28.5px/1 'Liberation Sans',sans-serif;color:#242424;letter-spacing:-0.214px;">Calibri Light</span>
<svg class="b" style="left:530.0px;top:378.4px;" width="21.6" height="12.2" viewBox="0 0 21.6 12.2"><path d="M2 2L10.8 10.2L19.6 2" stroke="#242424" stroke-width="2.2" fill="none" stroke-linejoin="miter"/></svg>
<span class="t" style="left:582.07px;top:370.87px;font:400 28.5px/1 'Liberation Sans',sans-serif;color:#242424;transform:scaleX(0.9313);transform-origin:0 0;">20</span>
<svg class="b" style="left:644.2px;top:378.4px;" width="21.6" height="12.2" viewBox="0 0 21.6 12.2"><path d="M2 2L10.8 10.2L19.6 2" stroke="#242424" stroke-width="2.2" fill="none" stroke-linejoin="miter"/></svg>
<span class="t" style="left:715.59px;top:364.10px;font:700 36.5px/1 'Liberation Sans',sans-serif;color:#333;transform:scaleX(0.9043);transform-origin:0 0;">B</span>
<span class="t" style="left:784.11px;top:362.00px;font:italic 400 40px/1 'Liberation Serif',serif;color:#333;transform:scaleX(1.1062);transform-origin:0 0;">I</span>
<span class="t" style="left:842.55px;top:364.84px;font:400 33.5px/1 'Liberation Sans',sans-serif;color:#333;transform:scaleX(1.1250);transform-origin:0 0;">U</span>
<div class="b" style="left:844px;top:399.3px;width:24px;height:2.3px;background:#333;"></div>
<svg class="b" style="left:900px;top:364px;" width="42" height="34" viewBox="0 0 42 34"><path d="M14.500 24.500L30 5.500a3.800 3.800 0 0 1 5.500-.5l1 .8a3.800 3.800 0 0 1 .5 5.500L21.500 30z" stroke="#333" stroke-width="2" fill="#f4f4f4" stroke-linejoin="round"/><path d="M14.500 24.500L10.500 28l-5 6H13.500l4.500-1.500l3.500-2.500z" fill="#707070"/></svg>
<div class="b" style="left:900px;top:397.9px;width:40px;height:6px;background:#ffff4d;"></div>
<svg class="b" style="left:955.3px;top:378.5px;" width="21.4" height="11.2" viewBox="0 0 21.4 11.2"><path d="M2 2L10.7 9.2L19.4 2" stroke="#242424" stroke-width="2.2" fill="none" stroke-linejoin="miter"/></svg>
<span class="t" style="left:1012.80px;top:361.25px;font:400 35.5px/1 'Liberation Sans',sans-serif;color:#333;transform:scaleX(0.9583);transform-origin:0 0;">A</span>
<div class="b" style="left:1003.9px;top:394px;width:40.1px;height:9.9px;background:#e8301f;"></div>
<svg class="b" style="left:1059.3px;top:378.5px;" width="21.4" height="11.2" viewBox="0 0 21.4 11.2"><path d="M2 2L10.7 9.2L19.4 2" stroke="#242424" stroke-width="2.2" fill="none" stroke-linejoin="miter"/></svg>
<span class="t" style="left:1110.00px;top:361.88px;font:400 37px/1 'Liberation Sans',sans-serif;color:#333;transform:scaleX(0.8400);transform-origin:0 0;">A</span>
<svg class="b" style="left:1124px;top:380px;" width="26" height="26" viewBox="0 0 26 26"><path d="M2.500 16.500L14.500 3.500l9 8.500L11.500 24.500z" fill="#fff" stroke="#a03cb4" stroke-width="2" stroke-linejoin="round"/><path d="M2.500 16.500l5.200-5.600l9 8.400l-5.200 5.200z" fill="#c77ad8" stroke="#a03cb4" stroke-width="2" stroke-linejoin="round"/></svg>
<div class="b" style="left:1174.2px;top:380.09999999999997px;width:5.2px;height:5.2px;background:#333;border-radius:50%;"></div>
<div class="b" style="left:1188.4px;top:380.09999999999997px;width:5.2px;height:5.2px;background:#333;border-radius:50%;"></div>
<div class="b" style="left:1202.7px;top:380.09999999999997px;width:5.2px;height:5.2px;background:#333;border-radius:50%;"></div>
<div class="b" style="left:1232.3px;top:360px;width:2px;height:48px;background:#d1d1d1;"></div>
<svg class="b" style="left:1255.9px;top:364.7px;" width="38" height="38" viewBox="0 0 38 38"><rect x="0" y="1" width="6" height="6" fill="#3a82c8"/><path d="M12.500 4H36.500" stroke="#242424" stroke-width="2.200"/><rect x="0" y="15" width="6" height="6" fill="#3a82c8"/><path d="M12.500 18H36.500" stroke="#242424" stroke-width="2.200"/><rect x="0" y="29.299999999999997" width="6" height="6" fill="#3a82c8"/><path d="M12.500 32.3H36.500" stroke="#242424" stroke-width="2.200"/></svg>
<svg class="b" style="left:1309.3px;top:378.5px;" width="21.4" height="11.2" viewBox="0 0 21.4 11.2"><path d="M2 2L10.7 9.2L19.4 2" stroke="#242424" stroke-width="2.2" fill="none" stroke-linejoin="miter"/></svg>
<svg class="b" style="left:1358.5px;top:364.7px;" width="40" height="38" viewBox="0 0 40 38"><text x="3.500" y="8.6" font-family="Liberation Sans" font-size="13" fill="#3a82c8" text-anchor="middle">1</text><path d="M13.500 4H37.500" stroke="#242424" stroke-width="2.200"/><text x="3.500" y="22.6" font-family="Liberation Sans" font-size="13" fill="#3a82c8" text-anchor="middle">2</text><path d="M13.500 18H37.500" stroke="#242424" stroke-width="2.200"/><text x="3.500" y="36.9" font-family="Liberation Sans" font-size="13" fill="#3a82c8" text-anchor="middle">3</text><path d="M13.500 32.3H37.500" stroke="#242424" stroke-width="2.200"/></svg>
<svg class="b" style="left:1413.3px;top:378.5px;" width="21.4" height="11.2" viewBox="0 0 21.4 11.2"><path d="M2 2L10.7 9.2L19.4 2" stroke="#242424" stroke-width="2.2" fill="none" stroke-linejoin="miter"/></svg>
<svg class="b" style="left:1464.2px;top:365.2px;" width="36" height="36" viewBox="0 0 36 36"><path d="M0 1.200H35.800M0 34H35.800" stroke="#b4b4b4" stroke-width="2"/><path d="M20 9.4H35.800" stroke="#b4b4b4" stroke-width="2"/><path d="M20 17.6H35.800" stroke="#b4b4b4" stroke-width="2"/><path d="M20 25.8H35.800" stroke="#b4b4b4" stroke-width="2"/><path d="M1 17.600H15.500M7.200 11.500L1 17.600l6.200 6.100" stroke="#a9cbea" stroke-width="2" fill="none"/></svg>
<svg class="b" style="left:1528.2px;top:365.2px;" width="36" height="36" viewBox="0 0 36 36"><path d="M0 1.200H35.800M0 34H35.800" stroke="#b4b4b4" stroke-width="2"/><path d="M20 9.4H35.800" stroke="#b4b4b4" stroke-width="2"/><path d="M20 17.6H35.800" stroke="#b4b4b4" stroke-width="2"/><path d="M20 25.8H35.800" stroke="#b4b4b4" stroke-width="2"/><path d="M0 17.600H14.500M8.500 11.500l6.200 6.100l-6.200 6.100" stroke="#a9cbea" stroke-width="2" fill="none"/></svg>
<svg class="b" style="left:1591.8px;top:365.2px;" width="36" height="36" viewBox="0 0 36 36"><path d="M0 1.2H35.8" stroke="#242424" stroke-width="2.200"/><path d="M0 9.4H27.7" stroke="#242424" stroke-width="2.200"/><path d="M0 17.6H35.8" stroke="#242424" stroke-width="2.200"/><path d="M0 25.8H27.7" stroke="#242424" stroke-width="2.200"/><path d="M0 34H35.8" stroke="#242424" stroke-width="2.200"/></svg>
<svg class="b" style="left:1638.1px;top:378.5px;" width="21.4" height="11.2" viewBox="0 0 21.4 11.2"><path d="M2 2L10.7 9.2L19.4 2" stroke="#242424" stroke-width="2.2" fill="none" stroke-linejoin="miter"/></svg>
<div class="b" style="left:1678px;top:360px;width:2px;height:48px;background:#d1d1d1;"></div>
<svg class="b" style="left:1700px;top:364px;" width="40" height="42" viewBox="0 0 40 42"><path d="M3.500 33L13 3h2.500L24 29M7 23.500H20" stroke="#333" stroke-width="2.200" fill="none"/><path d="M36.500 13.500c-4 2.500-9 8-12 14l3 2.500c4.500-4 8-10 9-16.500z" fill="#fff" stroke="#333" stroke-width="1.800" stroke-linejoin="round"/><path d="M24 27.500c-3-.5-6 1-7.500 4c-1 2-2.500 3.500-5 4c3.500 3 9.500 3.500 13 .5c2.500-2 3-4.500 2.500-6z" fill="#3f7fd6" stroke="#2b5fb0" stroke-width="1"/></svg>
<span class="t" style="left:1746.51px;top:370.87px;font:400 28.5px/1 'Liberation Sans',sans-serif;color:#242424;transform:scaleX(0.8853);transform-origin:0 0;">Styles</span>
<svg class="b" style="left:1824.1000000000001px;top:379.9px;" width="21.6" height="12.2" viewBox="0 0 21.6 12.2"><path d="M2 2L10.8 10.2L19.6 2" stroke="#242424" stroke-width="2.2" fill="none" stroke-linejoin="miter"/></svg>
<div class="b" style="left:1865.8px;top:360px;width:2px;height:48px;background:#d1d1d1;"></div>
<svg class="b" style="left:1886px;top:363px;" width="44" height="44" viewBox="0 0 44 44"><path d="M28.500 8V2.500H3V28H16" stroke="#333" stroke-width="2.200" fill="none"/><path d="M8.500 14l5.500 5.500L25 7.500" stroke="#333" stroke-width="2.200" fill="none"/><path d="M28.500 15.500l3.500 8.500l9 .8l-6.900 5.900l2.200 8.800l-7.800-4.800l-7.800 4.800l2.200-8.800L16 24.800l9-.8z" fill="#fbe3a0" stroke="#d9661f" stroke-width="2.200" stroke-linejoin="round"/></svg>
<span class="t" style="left:1937.00px;top:370.87px;font:400 28.5px/1 'Liberation Sans',sans-serif;color:#242424;transform:scaleX(0.8841);transform-origin:0 0;">Tags</span>
<svg class="b" style="left:1999.2px;top:379.9px;" width="21.6" height="12.2" viewBox="0 0 21.6 12.2"><path d="M2 2L10.8 10.2L19.6 2" stroke="#242424" stroke-width="2.2" fill="none" stroke-linejoin="miter"/></svg>
<div class="b" style="left:2039px;top:360px;width:2px;height:48px;background:#d1d1d1;"></div>
<span class="t" style="left:2063.30px;top:363.80px;font:400 21.5px/1 'Liberation Sans',sans-serif;color:#333;transform:scaleX(0.9223);transform-origin:0 0;">abc</span>
<svg class="b" style="left:2068px;top:385px;" width="24" height="17" viewBox="0 0 24 17"><path d="M1.500 8.500l6.500 6.500L22 1.500" stroke="#3c9a45" stroke-width="2" fill="none"/></svg>
<svg class="b" style="left:2115.8px;top:378.5px;" width="21.4" height="11.2" viewBox="0 0 21.4 11.2"><path d="M2 2L10.7 9.2L19.4 2" stroke="#242424" stroke-width="2.2" fill="none" stroke-linejoin="miter"/></svg>
<div class="b" style="left:2160.8px;top:360px;width:2px;height:48px;background:#d1d1d1;"></div>
<svg class="b" style="left:2188px;top:362px;" width="30" height="44" viewBox="0 0 30 44"><rect x="8.300" y="2.500" width="13.400" height="26" rx="6.700" fill="#8db7e8" stroke="#2a6ac0" stroke-width="2"/><path d="M2.500 21.500c0 7 5.500 11.500 12.500 11.500s12.500-4.500 12.500-11.500M15 33V42" stroke="#333" stroke-width="2" fill="none"/></svg>
<div class="b" style="left:2243px;top:360px;width:2px;height:48px;background:#d1d1d1;"></div>
<svg class="b" style="left:2266px;top:365px;" width="40" height="38" viewBox="0 0 40 38"><path d="M1.500 28.500V1.500H33" stroke="#333" stroke-width="2.200" fill="none"/><path d="M6.500 6.500H37V24L25.500 36H6.500z" stroke="#333" stroke-width="2.200" fill="#fff" stroke-linejoin="round"/><path d="M37 24H25.500V36" stroke="#333" stroke-width="2.200" fill="none" stroke-linejoin="round"/></svg>
<div class="b" style="left:2325px;top:360px;width:2px;height:48px;background:#d1d1d1;"></div>
<svg class="b" style="left:2349px;top:367.8px;" width="36" height="32.3" viewBox="0 0 36 32"><defs>
<linearGradient id="cpA" x1="0" y1="0" x2="0" y2="1"><stop offset="0" stop-color="#2f8fe8"/><stop offset=".25" stop-color="#3aa0e0"/><stop offset=".5" stop-color="#5cb85c"/><stop offset=".75" stop-color="#eec030"/><stop offset="1" stop-color="#f08a38"/></linearGradient>
<linearGradient id="cpB" x1="0" y1="1" x2="0" y2="0"><stop offset="0" stop-color="#9a55f0"/><stop offset=".4" stop-color="#d05ab0"/><stop offset=".75" stop-color="#ec6a80"/><stop offset="1" stop-color="#f4a040"/></linearGradient>
</defs>
<path d="M6.500 1C8 .300 12 .300 21 .300C24.500 .300 26.300 2.500 27.200 5.500L28.300 9L19.500 9.500C17.500 10 16.500 12 15.500 15L13.500 21.500C12.800 23.500 11.500 24.500 9 24.500L3.500 24.500C.800 24.500-.500 22.500 .300 19.800L4.500 5C5 3 5.500 1.800 6.500 1Z" fill="url(#cpA)"/><path d="M18.500 .300H21C24.500 .300 26.300 2.500 27.200 5.500L28.300 9L21.500 9.400C21 5.500 20 2.300 18.500 .300Z" fill="#2458d8"/>
<g transform="rotate(180 18 16)"><path d="M6.500 1C8 .300 12 .300 21 .300C24.500 .300 26.300 2.500 27.200 5.500L28.300 9L19.500 9.500C17.500 10 16.500 12 15.500 15L13.500 21.500C12.800 23.500 11.500 24.500 9 24.500L3.500 24.500C.800 24.500-.500 22.500 .300 19.800L4.500 5C5 3 5.500 1.800 6.500 1Z" fill="url(#cpB)"/><path d="M18.500 .300H21C24.500 .300 26.300 2.500 27.200 5.500L28.300 9L21.500 9.400C21 5.500 20 2.300 18.500 .300Z" fill="#d8502e"/></g></svg>
<span class="t" style="left:2394.80px;top:370.87px;font:400 28.5px/1 'Liberation Sans',sans-serif;color:#242424;">Copilot</span>
<div class="b" style="left:2503.8px;top:360px;width:2px;height:48px;background:#d1d1d1;"></div>
<svg class="b" style="left:2820.2000000000003px;top:386.75px;" width="21.4" height="11.5" viewBox="0 0 21.4 11.5"><path d="M2 2L10.7 9.5L19.4 2" stroke="#242424" stroke-width="2.2" fill="none" stroke-linejoin="miter"/></svg>
</body></html>
